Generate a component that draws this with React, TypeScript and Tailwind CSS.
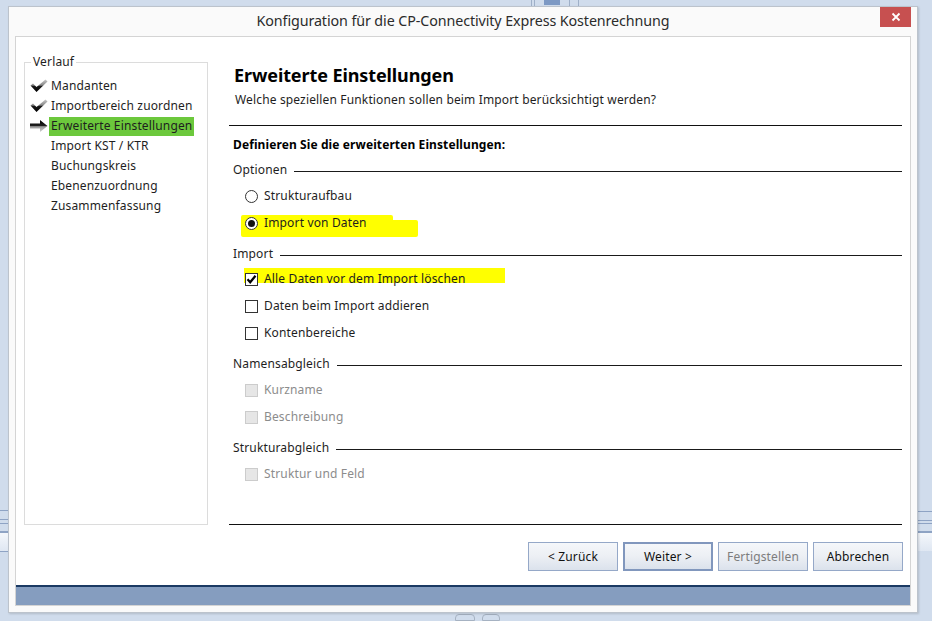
import React from "react";

const CheckIcon = () => (
  <svg width="18" height="14" viewBox="0 0 18 14">
    <defs>
      <linearGradient id="ck" x1="0" y1="0" x2="0" y2="1">
        <stop offset="0" stopColor="#c8c8c8" />
        <stop offset="0.45" stopColor="#8a8a8a" />
        <stop offset="0.55" stopColor="#1a1a1a" />
        <stop offset="1" stopColor="#000" />
      </linearGradient>
    </defs>
    <polygon points="0.5,6.5 3,4.5 6.5,8 15.5,0.5 17.5,2.5 6.5,13" fill="url(#ck)" />
  </svg>
);

const ArrowIcon = () => (
  <svg width="18" height="12" viewBox="0 0 18 12">
    <defs>
      <linearGradient id="ar" x1="0" y1="0" x2="0" y2="1">
        <stop offset="0" stopColor="#000" />
        <stop offset="0.5" stopColor="#222" />
        <stop offset="0.55" stopColor="#9a9a9a" />
        <stop offset="1" stopColor="#d0d0d0" />
      </linearGradient>
    </defs>
    <polygon points="0,3.5 10,3.5 10,0 17.5,6 10,12 10,8.5 0,8.5" fill="url(#ar)" />
  </svg>
);

const SectionLabel = ({ text, mt }: { text: string; mt: string }) => (
  <div className={`flex items-center h-[20px] pl-[4px] ${mt}`}>
    <span className="text-[12px] text-[#1e1e1e] leading-none tracking-[0.15px]">{text}</span>
    <div className="flex-1 h-px bg-[#1a1a1a] ml-[7px] mt-[2px]" />
  </div>
);

const Box = ({ checked, disabled }: { checked?: boolean; disabled?: boolean }) => (
  <div
    className={
      disabled
        ? "w-[13px] h-[13px] border border-[#cccccc] bg-[#e6e6e6]"
        : "w-[13px] h-[13px] border border-[#333333] bg-white flex items-center justify-center"
    }
  >
    {checked && (
      <svg width="11" height="11" viewBox="0 0 11 11">
        <path d="M1.5 5.3 L4.2 8.3 L9.5 1.8" stroke="#000" strokeWidth="2.2" fill="none" />
      </svg>
    )}
  </div>
);

const Radio = ({ checked }: { checked?: boolean }) => (
  <div className="w-[13px] h-[13px] rounded-full border border-[#333333] bg-white flex items-center justify-center">
    {checked && <div className="w-[7px] h-[7px] rounded-full bg-[#111]" />}
  </div>
);

const Row = ({
  children,
  mt,
  label,
  disabled,
  highlight,
}: {
  children: React.ReactNode;
  mt: string;
  label: string;
  disabled?: boolean;
  highlight?: React.ReactNode;
}) => (
  <div className={`relative flex items-center h-[20px] pl-[16px] ${mt}`}>
    {highlight}
    <div className="relative flex items-center translate-y-[1px]">
      {children}
      <span
        className={`ml-[6px] text-[12px] leading-none tracking-[0.15px] ${
          disabled ? "text-[#8c8c8c]" : "text-[#1e1e1e]"
        }`}
      >
        {label}
      </span>
    </div>
  </div>
);

const Btn = ({ label, focused, disabled }: { label: string; focused?: boolean; disabled?: boolean }) => (
  <div
    className={`w-[90px] h-[29px] flex items-center justify-center bg-gradient-to-b from-[#f5f7fa] via-[#eceff4] to-[#dbe2ec] ${
      focused ? "border-2 border-[#8197bd]" : "border border-[#95a8c8]"
    } text-[12px] tracking-[0.15px] ${disabled ? "text-[#7d7d7d]" : "text-[#111]"}`}
  >
    {label}
  </div>
);

export default function App() {
  const items = [
    { t: "Mandanten", icon: "check" },
    { t: "Importbereich zuordnen", icon: "check" },
    { t: "Erweiterte Einstellungen", icon: "arrow" },
    { t: "Import KST / KTR" },
    { t: "Buchungskreis" },
    { t: "Ebenenzuordnung" },
    { t: "Zusammenfassung" },
  ];
  return (
    <div className="relative w-[932px] h-[621px] overflow-hidden bg-[#d0dcec] font-['Noto_Sans',sans-serif]">
      {/* background app decorations */}
      <div className="absolute left-0 top-[510px] w-[8px] h-px bg-[#8ea3c4]" />
      <div className="absolute left-0 top-[519px] w-[8px] h-px bg-[#8ea3c4]" />
      <div className="absolute left-0 top-[523px] w-[8px] h-px bg-[#8ea3c4]" />
      <div className="absolute left-0 top-[531px] w-[8px] h-[2px] bg-[#8ea3c4]" />
      <div className="absolute left-0 top-[533px] w-[8px] h-[18px] bg-gradient-to-b from-[#f4f7fb] to-[#dfe7f2]" />
      <div className="absolute left-0 top-[551px] w-[8px] h-px bg-[#8ea3c4]" />
      <div className="absolute left-[918px] top-[511px] w-[14px] h-px bg-[#8ea3c4]" />
      <div className="absolute left-[918px] top-[520px] w-[14px] h-px bg-[#8ea3c4]" />
      <div className="absolute left-[918px] top-[523px] w-[14px] h-px bg-[#8ea3c4]" />
      <div className="absolute left-[918px] top-[531px] w-[14px] h-[2px] bg-[#8ea3c4]" />
      <div className="absolute left-[918px] top-[533px] w-[14px] h-[18px] bg-gradient-to-b from-[#f4f7fb] to-[#dfe7f2]" />
      <div className="absolute left-[531px] top-0 w-[4px] h-[6px] border-x border-[#9fb0c8]" />
      <div className="absolute left-[544px] top-0 w-[16px] h-[5px] bg-[#7d99c4]" />
      <div className="absolute left-[569px] top-0 w-[10px] h-[6px] border-x border-[#9fb0c8]" />
      <div className="absolute left-[455px] top-[614px] w-[20px] h-[7px] rounded-t-sm border border-[#a6b2c2]" />
      <div className="absolute left-[482px] top-[614px] w-[18px] h-[7px] rounded-t-sm border border-[#a6b2c2]" />

      {/* window */}
      <div className="absolute left-[8px] top-[6px] w-[910px] h-[607px] bg-[#fafafa] border border-[#bcc3cc] shadow-[1px_1px_2px_rgba(0,0,0,0.15)] flex flex-col">
        <div className="relative h-[29px] flex items-center justify-center">
          <span className="text-[14.3px] text-[#2b2b2b] tracking-[-0.1px] mt-[-2px]">
            Konfiguration für die CP-Connectivity Express Kostenrechnung
          </span>
          <div className="absolute right-[6px] top-0 w-[31px] h-[20px] bg-[#c75050] flex items-center justify-center">
            <svg width="10" height="10" viewBox="0 0 10 10">
              <path d="M1.5 1.5 L8.5 8.5 M8.5 1.5 L1.5 8.5" stroke="#fff" strokeWidth="1.8" />
            </svg>
          </div>
        </div>
        <div className="mx-[6px] h-[570px] border border-[#d4d4d4] bg-white flex flex-col">
          <div className="h-[548px] flex">
            {/* left group box */}
            <div className="relative ml-[8px] mt-[25px] w-[184px] h-[463px] border border-[#dcdcdc]">
              <span className="absolute -top-[9px] left-[6px] bg-white px-[2px] text-[12px] leading-[16px] text-[#1e1e1e] tracking-[0.15px]">
                Verlauf
              </span>
              <div className="pt-[13px] pl-[5px] flex flex-col">
                {items.map((it) => (
                  <div key={it.t} className="h-[20px] flex items-center">
                    <div className="w-[19px] flex items-center">
                      {it.icon === "check" && <CheckIcon />}
                      {it.icon === "arrow" && <ArrowIcon />}
                    </div>
                    <span
                      className={`px-[2px] h-[19px] flex items-center text-[12px] text-[#1e1e1e] tracking-[0.15px] ${
                        it.icon === "arrow" ? "bg-[#6cc83c]" : ""
                      }`}
                    >
                      {it.t}
                    </span>
                  </div>
                ))}
              </div>
            </div>

            {/* right content */}
            <div className="ml-[21px] w-[673px] flex flex-col">
              <div className="mt-[26px] h-[24px] flex items-center pl-[5px] text-[18px] font-bold text-[#000] tracking-[-0.1px]">
                Erweiterte Einstellungen
              </div>
              <div className="mt-[5px] h-[16px] flex items-center pl-[6px] text-[12px] text-[#1e1e1e] tracking-[0.15px]">
                Welche speziellen Funktionen sollen beim Import berücksichtigt werden?
              </div>
              <div className="mt-[17px] h-px bg-[#111]" />
              <div className="mt-[9px] h-[20px] flex items-center pl-[4px] text-[12px] font-bold text-[#000] tracking-[0.1px]">
                Definieren Sie die erweiterten Einstellungen:
              </div>
              <SectionLabel text="Optionen" mt="mt-[5px]" />
              <Row mt="mt-[5px]" label="Strukturaufbau">
                <Radio />
              </Row>
              <Row
                mt="mt-[7px]"
                label="Import von Daten"
                highlight={
                  <>
                    <div className="absolute left-[12px] top-[3px] w-[152px] h-[22px] bg-[#ffff00] rounded-[2px]" />
                    <div className="absolute left-[160px] top-[8px] w-[29px] h-[17px] bg-[#ffff00] rounded-[2px]" />
                  </>
                }
              >
                <Radio checked />
              </Row>
              <SectionLabel text="Import" mt="mt-[12px]" />
              <Row
                mt="mt-[4px]"
                label="Alle Daten vor dem Import löschen"
                highlight={<div className="absolute left-[15px] top-[0px] w-[261px] h-[15px] bg-[#ffff00]" />}
              >
                <Box checked />
              </Row>
              <Row mt="mt-[7px]" label="Daten beim Import addieren">
                <Box />
              </Row>
              <Row mt="mt-[7px]" label="Kontenbereiche">
                <Box />
              </Row>
              <SectionLabel text="Namensabgleich" mt="mt-[12px]" />
              <Row mt="mt-[5px]" label="Kurzname" disabled>
                <Box disabled />
              </Row>
              <Row mt="mt-[7px]" label="Beschreibung" disabled>
                <Box disabled />
              </Row>
              <SectionLabel text="Strukturabgleich" mt="mt-[12px]" />
              <Row mt="mt-[5px]" label="Struktur und Feld" disabled>
                <Box disabled />
              </Row>
              <div className="flex-1" />
              <div className="h-px bg-[#111]" />
              <div className="mt-[17px] mb-[14px] flex justify-end gap-[5px] -mr-[1px]">
                <Btn label="< Zurück" />
                <Btn label="Weiter >" focused />
                <Btn label="Fertigstellen" disabled />
                <Btn label="Abbrechen" />
              </div>
            </div>
          </div>
          <div className="h-[2px] bg-[#1b3a63]" />
          <div className="h-[18px] bg-[#859dbf]" />
        </div>
      </div>
    </div>
  );
}
